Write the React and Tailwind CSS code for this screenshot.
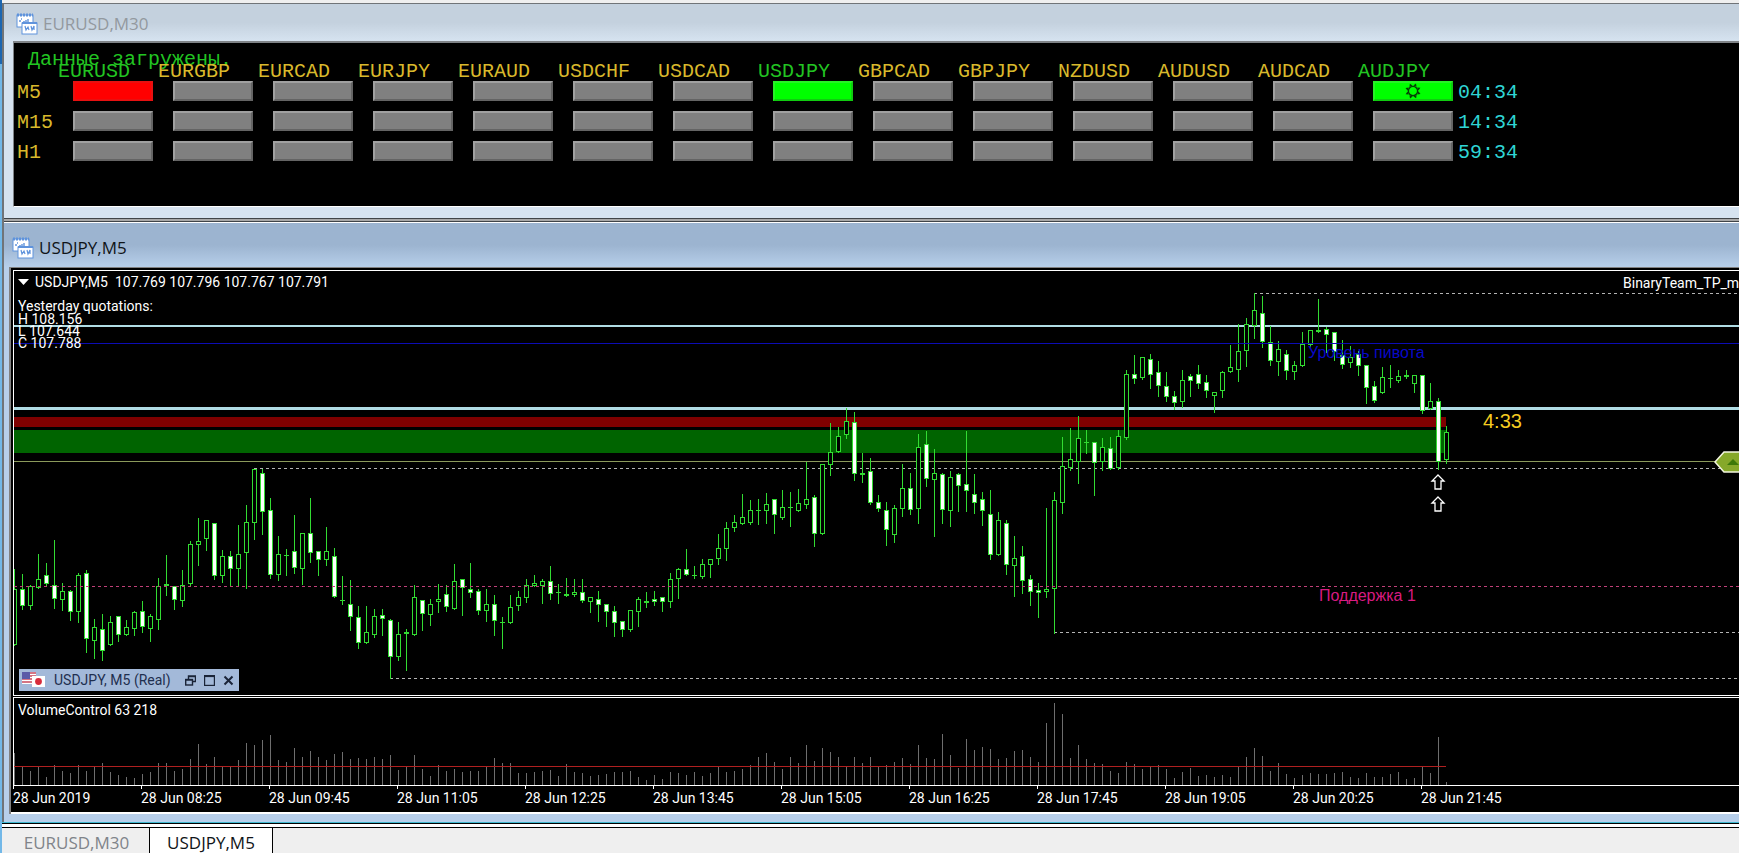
import clsx from "clsx";

const PAIRS = ["EURUSD", "EURGBP", "EURCAD", "EURJPY", "EURAUD", "USDCHF", "USDCAD", "USDJPY", "GBPCAD", "GBPJPY", "NZDUSD", "AUDUSD", "AUDCAD", "AUDJPY"];

const TIMEFRAMES = [
  { name: "M5", left: "04:34", signals: { EURUSD: "sell", USDJPY: "buy", AUDJPY: "buy" } },
  { name: "M15", left: "14:34", signals: {} },
  { name: "H1", left: "59:34", signals: {} },
];

const ACTIVE_PAIRS = ["EURUSD", "USDJPY", "AUDJPY"];

// [high, body top, body bottom, low, bearish]
const CANDLES = [
  [299, 319, 375, 375, 0], [304, 319, 336, 339, 1], [315, 316, 336, 339, 0], [284, 309, 318, 318, 0], [293, 305, 314, 316, 1],
  [270, 315, 329, 338, 1], [313, 321, 330, 340, 0], [320, 321, 342, 350, 1], [303, 305, 342, 352, 0], [300, 303, 369, 382, 1],
  [349, 357, 371, 388, 0], [344, 359, 381, 390, 1], [346, 352, 375, 375, 0], [346, 346, 365, 371, 1], [350, 357, 365, 365, 0],
  [341, 342, 359, 365, 0], [331, 341, 357, 362, 1], [344, 346, 359, 371, 0], [308, 316, 350, 359, 0], [285, 314, 316, 325, 1],
  [316, 316, 330, 339, 1], [300, 315, 331, 336, 0], [271, 274, 314, 316, 0], [248, 271, 275, 295, 0], [250, 250, 269, 280, 0],
  [253, 253, 306, 309, 1], [280, 286, 306, 312, 0], [281, 286, 299, 316, 1], [255, 284, 299, 316, 0], [235, 252, 283, 318, 0],
  [199, 199, 253, 269, 0], [199, 203, 242, 264, 1], [228, 240, 305, 308, 1], [266, 284, 305, 310, 0], [279, 285, 285, 305, 0],
  [245, 281, 298, 303, 1], [263, 263, 299, 314, 0], [228, 263, 283, 292, 1], [281, 281, 290, 305, 1], [257, 281, 290, 295, 0],
  [278, 286, 327, 327, 1], [306, 330, 330, 334, 0], [310, 334, 347, 360, 1], [336, 347, 373, 378, 1], [336, 362, 373, 373, 0],
  [339, 346, 365, 367, 0], [339, 345, 349, 365, 1], [349, 350, 387, 408, 1], [352, 364, 387, 390, 0], [359, 362, 364, 400, 1],
  [315, 327, 365, 365, 0], [330, 330, 344, 360, 1], [329, 334, 345, 355, 0], [314, 329, 332, 342, 0], [315, 324, 337, 341, 1],
  [294, 311, 339, 339, 0], [309, 309, 318, 345, 1], [293, 319, 323, 327, 1], [319, 321, 341, 344, 1], [319, 334, 341, 351, 0],
  [325, 334, 351, 365, 1], [347, 352, 352, 378, 0], [325, 337, 353, 353, 0], [321, 327, 336, 340, 0], [309, 315, 328, 332, 0],
  [305, 313, 316, 316, 0], [309, 311, 316, 333, 0], [296, 311, 324, 329, 1], [314, 322, 322, 333, 0], [308, 324, 326, 326, 0],
  [309, 322, 325, 326, 0], [309, 322, 331, 332, 1], [327, 327, 332, 342, 0], [321, 329, 335, 351, 1], [334, 334, 342, 356, 1],
  [336, 341, 353, 366, 1], [351, 351, 360, 366, 1], [340, 340, 360, 361, 0], [327, 329, 342, 356, 0], [322, 331, 333, 337, 1],
  [321, 329, 332, 335, 1], [327, 327, 332, 341, 1], [303, 309, 332, 337, 0], [298, 299, 309, 328, 0], [279, 299, 305, 305, 1],
  [296, 305, 305, 308, 0], [289, 294, 307, 308, 0], [289, 289, 295, 307, 0], [264, 278, 289, 294, 0], [252, 258, 279, 290, 0],
  [245, 252, 258, 261, 0], [224, 247, 254, 254, 0], [230, 240, 253, 254, 0], [229, 240, 240, 254, 0], [223, 234, 241, 253, 0],
  [229, 229, 245, 263, 1], [220, 237, 248, 249, 0], [222, 237, 237, 256, 0], [219, 233, 241, 241, 0], [192, 229, 235, 238, 0],
  [225, 227, 264, 276, 1], [194, 194, 264, 264, 0], [153, 182, 195, 205, 0], [157, 166, 182, 182, 0], [138, 151, 165, 168, 0],
  [142, 152, 204, 210, 1], [183, 203, 205, 212, 1], [188, 201, 233, 234, 1], [225, 232, 239, 241, 1], [232, 240, 260, 275, 1],
  [235, 238, 265, 272, 0], [194, 218, 239, 246, 0], [203, 218, 240, 244, 1], [164, 177, 239, 253, 0], [161, 174, 209, 216, 1],
  [179, 203, 210, 266, 0], [203, 204, 240, 253, 1], [201, 207, 241, 256, 0], [203, 204, 216, 241, 1], [161, 214, 221, 241, 1],
  [204, 224, 233, 243, 1], [222, 229, 241, 255, 1], [220, 244, 285, 289, 1], [242, 250, 285, 285, 0], [250, 253, 295, 304, 1],
  [266, 288, 296, 326, 0], [276, 286, 311, 323, 1], [305, 309, 322, 335, 1], [313, 320, 323, 347, 1], [238, 319, 322, 327, 0],
  [222, 230, 319, 363, 0], [167, 196, 233, 243, 0], [158, 189, 198, 200, 0], [146, 168, 192, 213, 0], [160, 172, 172, 183, 0],
  [172, 172, 193, 225, 1], [168, 177, 192, 200, 0], [167, 178, 199, 199, 1], [160, 166, 198, 199, 0], [100, 104, 168, 169, 0],
  [85, 104, 109, 113, 1], [87, 87, 108, 109, 0], [84, 89, 105, 118, 1], [91, 102, 116, 126, 1], [102, 116, 127, 131, 1],
  [121, 126, 133, 139, 1], [100, 110, 132, 137, 0], [104, 106, 111, 126, 1], [95, 104, 114, 118, 1], [105, 112, 121, 127, 1],
  [122, 122, 126, 142, 0], [101, 102, 121, 127, 0], [75, 97, 102, 102, 0], [54, 81, 100, 111, 0], [48, 54, 81, 96, 0],
  [23, 40, 56, 68, 0], [26, 43, 72, 77, 1], [56, 72, 91, 95, 1], [71, 79, 92, 105, 0], [80, 84, 101, 109, 1],
  [91, 95, 102, 109, 0], [62, 74, 96, 96, 0], [60, 60, 75, 77, 0], [29, 60, 62, 62, 1], [57, 59, 65, 82, 1],
  [62, 62, 82, 90, 1], [70, 85, 95, 98, 1], [76, 87, 93, 97, 0], [81, 84, 96, 105, 1], [95, 95, 118, 133, 1],
  [111, 116, 131, 132, 1], [97, 107, 123, 123, 0], [95, 108, 108, 117, 0], [100, 106, 111, 112, 0], [100, 105, 107, 108, 1],
  [105, 105, 114, 122, 0], [105, 105, 141, 143, 1], [113, 131, 139, 139, 0], [128, 131, 192, 199, 1], [156, 162, 190, 193, 0],
];

const VOLUMES = [
  32, 19, 14, 19, 8, 20, 14, 12, 20, 14, 19, 22, 13, 10, 8, 7, 11, 13, 22, 22, 14, 16, 26, 41, 21, 28, 19, 19, 25, 42, 40, 45, 50, 25, 23, 37,
  28, 34, 28, 25, 31, 33, 26, 27, 26, 28, 26, 30, 15, 19, 30, 16, 9, 20, 14, 16, 13, 14, 14, 18, 27, 22, 22, 12, 12, 13, 14, 15, 9, 21, 13, 12,
  9, 10, 11, 13, 13, 14, 8, 5, 10, 6, 13, 12, 10, 13, 9, 12, 18, 13, 14, 16, 20, 28, 32, 23, 16, 28, 22, 40, 24, 37, 33, 28, 18, 28, 22, 28,
  18, 20, 23, 27, 21, 40, 27, 26, 51, 30, 17, 46, 35, 38, 36, 26, 27, 34, 35, 28, 23, 62, 82, 71, 27, 40, 26, 22, 21, 14, 12, 23, 21, 16, 18, 20,
  16, 7, 13, 17, 9, 10, 8, 10, 8, 18, 28, 37, 29, 14, 22, 11, 7, 10, 12, 11, 11, 12, 13, 8, 7, 12, 8, 8, 11, 13, 6, 7, 18, 12, 48, 3,
];

const TIMES = ["28 Jun 2019", "28 Jun 08:25", "28 Jun 09:45", "28 Jun 11:05", "28 Jun 12:25", "28 Jun 13:45", "28 Jun 15:05", "28 Jun 16:25", "28 Jun 17:45", "28 Jun 19:05", "28 Jun 20:25", "28 Jun 21:45"];

function ChartIcon() {
  return (
    <svg width="22" height="22" viewBox="0 0 22 22" className="shrink-0" aria-hidden="true">
      <rect x="1" y="2" width="16" height="12" fill="#fff" stroke="#5f93dc" />
      <path d="M1 2h16" stroke="#5f93dc" strokeWidth="3" strokeDasharray="2 1" />
      <path d="M3 8h2M5 6h1M7 9h2M10 7v2M12 6v3" stroke="#5f93dc" strokeWidth="1.4" />
      <rect x="6" y="10" width="15" height="11" fill="#fff" stroke="#5f93dc" />
      <path d="M6 10h15" stroke="#5f93dc" strokeWidth="2" />
      <path d="M9 13l1 4 2-3 1 3M15 13l1 4 2-4v4" fill="none" stroke="#5f93dc" strokeWidth="1.2" />
    </svg>
  );
}

function SunIcon() {
  return (
    <svg width="16" height="16" viewBox="-8 -8 16 16" className="mx-auto" aria-hidden="true">
      <circle r="4.6" fill="none" stroke="#063806" strokeWidth="1.3" />
      {[0, 45, 90, 135, 180, 225, 270, 315].map((a) => (
        <path key={a} d="M-1.7 -5.2L0 -8L1.7 -5.2Z" fill="#063806" transform={`rotate(${a + 22})`} />
      ))}
    </svg>
  );
}

function SignalButton({ pair, timeframe, signal }) {
  return (
    <button
      aria-label={`${pair} ${timeframe}`}
      className={clsx(
        "block h-5 w-20 border-2",
        signal === "sell" && "border-[#e81010] bg-[#ff0000]",
        signal === "buy" && "border-t-[#28f028] border-r-[#10cc10] border-b-[#10cc10] border-l-[#28f028] bg-[#00ff00]",
        !signal && "border-t-[#a0a0a0] border-r-[#646464] border-b-[#646464] border-l-[#a0a0a0] bg-[#808080]"
      )}
    >
      {pair === "AUDJPY" && signal ? <SunIcon /> : null}
    </button>
  );
}

function SignalPanel() {
  return (
    <div className="h-[163px] overflow-hidden bg-black pt-1.5 font-['Liberation_Mono',monospace] text-xl">
      <p className="h-[13px] pl-3.5 leading-[22px] whitespace-nowrap text-[#22c522]">Данные загружены.</p>
      <table className="table-fixed border-collapse text-left whitespace-nowrap">
        <thead>
          <tr className="h-[19px] leading-[19px]">
            <th className="w-11 p-0" />
            {PAIRS.map((pair) => (
              <th key={pair} className={clsx("w-[100px] min-w-[100px] p-0 font-normal", ACTIVE_PAIRS.includes(pair) ? "text-[#22c522]" : "text-[#d9b92c]")}>
                {pair}
              </th>
            ))}
            <th className="p-0" />
          </tr>
        </thead>
        <tbody>
          {TIMEFRAMES.map((tf) => (
            <tr key={tf.name} className="h-[30px] align-top leading-6">
              <th className="w-11 max-w-11 p-0 pl-[3px] font-normal text-[#d9b92c]">{tf.name}</th>
              {PAIRS.map((pair) => (
                <td key={pair} className="p-0 pl-[15px]">
                  <SignalButton pair={pair} timeframe={tf.name} signal={tf.signals[pair]} />
                </td>
              ))}
              <td className="p-0 text-[#2fd5d5]">{tf.left}</td>
            </tr>
          ))}
        </tbody>
      </table>
    </div>
  );
}

function Candle({ index, data }) {
  const [high, top, bottom, low, bearish] = data;
  const x = index * 8;
  const height = bottom - top;
  return (
    <g>
      <rect x={x} y={high} width="1" height={low - high + 1} fill="#32dc32" />
      <rect x={x - 2} y={top} width="5" height={Math.max(height, 1)} fill="#32dc32" />
      {height > 2 ? <rect x={x - 1} y={top + 1} width="3" height={height - 2} fill={bearish ? "#fff" : "#000"} /> : null}
    </g>
  );
}

function DashedLine({ x, y, color = "#b4b4b4" }) {
  return <line x1={x} x2="100%" y1={y} y2={y} stroke={color} strokeDasharray="3 3" />;
}

function PriceChart() {
  return (
    <svg className="block h-[424px] w-full" shapeRendering="crispEdges" role="img" aria-label="USDJPY,M5">
      <rect y="54" width="100%" height="2" fill="#b0dce4" />
      <rect y="136" width="100%" height="3" fill="#b0dce4" />
      <g transform="translate(0 -1)">
        <rect y="147" width="1432" height="10" fill="#800000" />
        <rect y="160" width="1432" height="23" fill="#006400" />
        <rect y="191" width="100%" height="1" fill="#8b9a5b" />
        <DashedLine x="1240" y="23.5" />
        <DashedLine x="240" y="198.5" />
        <DashedLine x="1040" y="362.5" />
        <DashedLine x="376" y="408.5" />
        {CANDLES.map((c, i) => (
          <Candle key={i} index={i} data={c} />
        ))}
        <rect y="73" width="100%" height="1" fill="#0c0cb4" />
        <DashedLine x="0" y="316.5" color="#c04078" />
      </g>
      <g fill="none" stroke="#fff" strokeWidth="1.3" shapeRendering="auto">
        <path d="M1424 204l6 6h-3v8h-6v-8h-3z" />
        <path d="M1424 226l6 6h-3v8h-6v-8h-3z" />
      </g>
      <g className="font-['Liberation_Sans',Arial,sans-serif]">
        <text x="1294" y="87" fontSize="16" fill="#0808c8">Уровень пивота</text>
        <text x="1305" y="330" fontSize="16" fill="#d81b80">Поддержка 1</text>
        <text x="1469" y="157" fontSize="20" fill="#f5cc20">4:33</text>
      </g>
    </svg>
  );
}

function ChartCaption() {
  return (
    <div className="absolute bottom-1 left-[5px] flex h-[22px] w-[220px] items-center justify-between bg-[#a3b9d9] px-[3px] text-[#1f2f4f]">
      <span className="flex items-center gap-2">
        <svg width="24" height="16" viewBox="0 0 24 16" aria-hidden="true">
          <rect width="14" height="12" fill="#fff" />
          <path d="M0 1h14M0 4h14M0 7h14M0 10h14" stroke="#c8485c" strokeWidth="1.5" />
          <rect width="8" height="7" fill="#5a5aa8" />
          <rect x="10" y="4" width="13" height="11" fill="#fff" />
          <circle cx="16.5" cy="9.5" r="3.4" fill="#d82c3c" />
        </svg>
        USDJPY, M5 (Real)
      </span>
      <span className="flex items-center gap-2 pr-0.5">
        <button aria-label="Restore" className="block">
          <svg width="11" height="11" viewBox="0 0 11 11" fill="none" stroke="#1a2438" strokeWidth="1.4">
            <path d="M3.5 4V1h7v5.5h-3M3.5 1.5h7" />
            <rect x=".7" y="4.5" width="6.8" height="5.5" />
            <path d="M.7 5h7" />
          </svg>
        </button>
        <button aria-label="Maximize" className="block">
          <svg width="11" height="11" viewBox="0 0 11 11" fill="none" stroke="#1a2438" strokeWidth="1.2">
            <rect x=".6" y=".6" width="9.8" height="9.8" />
            <path d="M.6 1.5h9.8" />
          </svg>
        </button>
        <button aria-label="Close" className="block">
          <svg width="11" height="11" viewBox="0 0 11 11" stroke="#1a2438" strokeWidth="2">
            <path d="M1.5 1.5l8 8M9.5 1.5l-8 8" />
          </svg>
        </button>
      </span>
    </div>
  );
}

function ChartPanel() {
  return (
    <div className="overflow-hidden border-t border-l-2 border-[#808080] bg-black font-['Roboto',Tahoma,sans-serif] text-sm text-white">
      <div className="bg-black pt-0.5 pl-0.5">
        <div className="relative border border-r-0 border-white">
          <PriceChart />
          <div className="absolute inset-x-0 top-0 flex items-start justify-between pt-0.5 pl-1">
            <div>
              <p className="flex items-center gap-1.5 leading-[18px] whitespace-pre">
                <svg width="11" height="6" viewBox="0 0 11 6" aria-hidden="true">
                  <path d="M0 0h11L5.5 6z" fill="#fff" />
                </svg>
                {"USDJPY,M5  107.769 107.796 107.767 107.791"}
              </p>
              <div className="pt-2 leading-3">
                <p className="leading-[14px]">Yesterday quotations:</p>
                <p>H 108.156</p>
                <p>L 107.644</p>
                <p>C 107.788</p>
              </div>
            </div>
            <p className="w-[116px] overflow-hidden leading-[20px] whitespace-nowrap">BinaryTeam_TP_m</p>
          </div>
          <svg width="25" height="22" className="absolute top-[180px] right-0" aria-hidden="true">
            <path d="M26 1H10L1 11l9 10h16" fill="#86a82a" stroke="#f4f6e0" strokeWidth="1.5" />
            <path d="M13 14l6-6 6 6z" fill="#3c7808" />
          </svg>
          <ChartCaption />
        </div>
        <div className="relative mt-px h-[89px] border-y border-l border-white">
          <p className="pt-[3px] pl-1 leading-[18px]">VolumeControl 63 218</p>
          <svg className="absolute inset-0 h-full w-full" shapeRendering="crispEdges" aria-hidden="true">
            {VOLUMES.map((v, i) => (
              <rect key={i} x={i * 8} y={87 - v} width="1" height={v} fill="#6e6e6e" />
            ))}
            <rect y="68" width="1432" height="1" fill="#b02020" />
          </svg>
        </div>
        <div className="flex h-[26px]">
          {TIMES.map((t) => (
            <div key={t} className="w-32 shrink-0 whitespace-nowrap">
              <div className="h-[3px] w-px bg-white" />
              <p className="leading-[18px]">{t}</p>
            </div>
          ))}
        </div>
      </div>
      <div className="h-0.5 bg-white" />
    </div>
  );
}

export default function App() {
  return (
    <div className="min-h-screen overflow-hidden bg-[#efefef] font-['Open_Sans',sans-serif]">
      <div className="flex">
        <div className="flex w-0.5 shrink-0 flex-col bg-[#72b8e8]">
          <div className="h-16 bg-[#1c66b0]" />
        </div>
        <main className="min-w-0 flex-1 pt-[3px]">
          <section className="border-t border-l-2 border-[#707478] bg-[#d6e3f0] pb-[11px]">
            <h2 className="flex h-[37px] items-center gap-[5px] bg-linear-to-b from-[#c4d1de] from-50% to-[#d6e3f0] pt-0.5 pl-3 text-[17px] text-[#93999f]">
              <ChartIcon />
              EURUSD,M30
            </h2>
            <div className="ml-[9px] border-t-2 border-b border-l border-t-[#808488] border-b-white border-l-[#808488]">
              <SignalPanel />
            </div>
          </section>
          <section className="border-l-2 border-[#707478] bg-[#b7cfea] pb-2">
            <div className="h-1 border-y border-[#404448] bg-[#a8a8a8]" />
            <div className="h-px bg-white" />
            <h2 className="flex h-11 items-center gap-[5px] bg-linear-to-b from-[#9cb4d0] from-50% to-[#b7cfea] pt-1.5 pl-2 text-[17px] text-[#101418]">
              <ChartIcon />
              USDJPY,M5
            </h2>
            <div className="ml-[5px]">
              <ChartPanel />
            </div>
          </section>
          <div className="border-t border-b border-t-[#40b8d0] border-b-black">
            <div className="h-1 border-t border-black bg-white" />
          </div>
          <nav className="flex h-[25px] pl-0.5 text-[17px] leading-[29px]">
            <button className="w-[145px] text-[#80848a]">EURUSD,M30</button>
            <button className="w-[124px] border-x border-black bg-white text-[#101418]">USDJPY,M5</button>
          </nav>
        </main>
      </div>
    </div>
  );
}
